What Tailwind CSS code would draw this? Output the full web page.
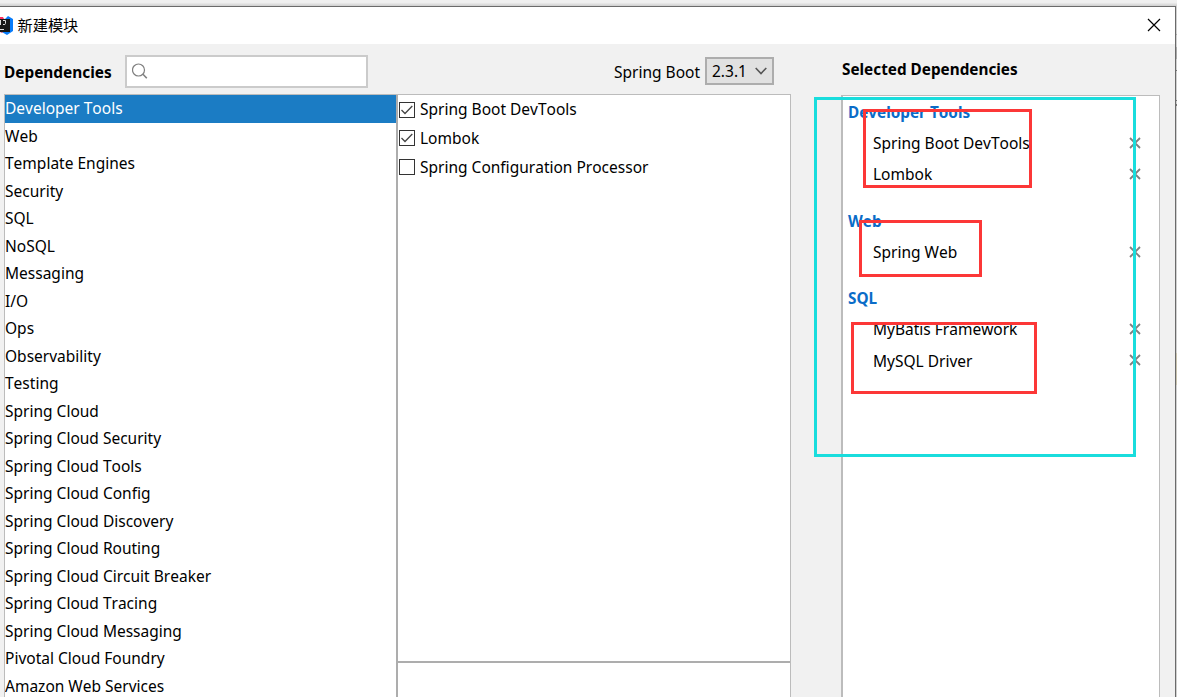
<!DOCTYPE html>
<html lang="zh-CN">
<head>
<meta charset="utf-8">
<title>新建模块</title>
<script src="https://cdn.jsdelivr.net/npm/@tailwindcss/browser@4"></script>
</head>
<body class="w-[1177px] h-[697px] overflow-hidden bg-[#f0f0f0] font-['Noto_Sans','Noto_Sans_CJK_SC',sans-serif] text-[15.5px] text-black [font-kerning:none]">
<div class="relative flex h-[697px] w-[1177px] flex-col overflow-hidden">
  <div class="h-1.5 shrink-0 bg-linear-to-b from-[#f0f0f0] from-40% to-[#cfcfcf]"></div>
  <div class="flex min-h-0 flex-1">
    <main class="flex w-[1176px] shrink-0 flex-col border-t border-r border-[#6b6b6b] bg-[#f1f1f1]">
      <header class="flex h-[37px] shrink-0 items-center bg-white pb-0.5">
        <svg class="h-5 w-[14px] shrink-0" viewBox="0 0 14 20">
          <path d="M0 3L5 4L8 1L13 4V16L7 20L0 16Z" fill="#087cfa"/>
          <path d="M0 2H3L4 4H0Z" fill="#fe315d"/><path d="M0 16H4L2 18L0 17Z" fill="#d94b78"/>
          <path d="M0 4H10V17H0Z" fill="#171717"/>
          <path d="M0.500 5V10M3 5.500H5.500V8.500Q5.500 10 3 9.500M0 14.500H4" stroke="#ddd" stroke-width="1" fill="none"/>
        </svg>
        <h1 class="ml-[3.500px] flex-1 text-[15.200px] leading-5">新建模块</h1>
        <svg class="mr-[14px] size-[14px]" viewBox="0 0 14 14" fill="none" stroke="#000" stroke-width="1.2"><path d="M1 1L13 13M13 1L1 13"/></svg>
      </header>
      <div class="flex min-h-0 flex-1">
        <section class="ml-1 flex w-[787px] shrink-0 flex-col">
          <div class="flex h-[50px] shrink-0 items-center pt-1">
            <h2 class="w-[121px] pt-[3px] text-[15.400px] font-bold leading-5">Dependencies</h2>
            <div class="flex h-[33px] w-[243px] items-center border-2 border-[#cbcbcb] bg-white pl-[5px]">
              <svg class="size-4" viewBox="0 0 16 16" fill="none" stroke="#7f7f7f" stroke-width="1.2"><circle cx="6.500" cy="7" r="6"/><path d="M11 11.300L14.800 15.300" stroke-width="1.6"/></svg>
            </div>
            <span class="ml-auto mr-[5px] pt-px leading-5">Spring Boot</span>
            <div class="mr-[17px] flex h-7 w-[69px] items-center justify-between border-2 border-[#adadad] bg-[#e1e1e1] pr-[5px] pl-[5px]">
              <span class="leading-5">2.3.1</span>
              <svg class="h-2 w-3" viewBox="0 0 12 8" fill="none" stroke="#555" stroke-width="1.6"><path d="M0.700 1L6 6.500L11.300 1"/></svg>
            </div>
          </div>
          <div class="flex min-h-0 flex-1 border-t border-r border-l border-[#bcbcbc] bg-white">
            <ul class="w-[391px] shrink-0 overflow-hidden leading-[27px]">
              <li class="-mb-[0.5px] h-7 bg-[#1b7cc4] text-white">Developer Tools</li>
              <li class="h-[27.5px]">Web</li>
              <li class="h-[27.5px]">Template Engines</li>
              <li class="h-[27.5px]">Security</li>
              <li class="h-[27.5px]">SQL</li>
              <li class="h-[27.5px]">NoSQL</li>
              <li class="h-[27.5px]">Messaging</li>
              <li class="h-[27.5px]">I/O</li>
              <li class="h-[27.5px]">Ops</li>
              <li class="h-[27.5px]">Observability</li>
              <li class="h-[27.5px]">Testing</li>
              <li class="h-[27.5px]">Spring Cloud</li>
              <li class="h-[27.5px]">Spring Cloud Security</li>
              <li class="h-[27.5px]">Spring Cloud Tools</li>
              <li class="h-[27.5px]">Spring Cloud Config</li>
              <li class="h-[27.5px]">Spring Cloud Discovery</li>
              <li class="h-[27.5px]">Spring Cloud Routing</li>
              <li class="h-[27.5px]">Spring Cloud Circuit Breaker</li>
              <li class="h-[27.5px]">Spring Cloud Tracing</li>
              <li class="h-[27.5px]">Spring Cloud Messaging</li>
              <li class="h-[27.5px]">Pivotal Cloud Foundry</li>
              <li class="h-[27.5px]">Amazon Web Services</li>
            </ul>
            <div class="flex flex-1 flex-col border-l-2 border-[#adadad]">
              <ul class="h-[566px] shrink-0 pl-px">
                <li class="flex h-[29px] items-center gap-[5px]"><svg class="size-4" viewBox="0 0 16 16" fill="none" stroke="#333"><rect x=".5" y=".5" width="15" height="15"/><path d="M2.500 8L6 11.500L13.300 4" stroke="#444" stroke-width="1.3"/></svg>Spring Boot DevTools</li>
                <li class="flex h-[28px] items-center gap-[5px]"><svg class="size-4" viewBox="0 0 16 16" fill="none" stroke="#333"><rect x=".5" y=".5" width="15" height="15"/><path d="M2.500 8L6 11.500L13.300 4" stroke="#444" stroke-width="1.3"/></svg><span class="pt-0.5">Lombok</span></li>
                <li class="flex h-[30px] items-center gap-[5px]"><svg class="size-4" viewBox="0 0 16 16" fill="none" stroke="#333"><rect x=".5" y=".5" width="15" height="15"/></svg><span class="pt-0.5">Spring Configuration Processor</span></li>
              </ul>
              <div class="h-0.5 bg-[#adadad]"></div>
            </div>
          </div>
        </section>
        <section class="ml-[50px] flex w-[319px] shrink-0 flex-col">
          <h2 class="h-[51px] pt-[15px] pl-px text-[15.300px] font-bold leading-5">Selected Dependencies</h2>
          <div class="flex-1 border-t border-r border-l-2 border-[#bcbcbc] bg-white pl-[5px]">
            <h3 class="flex h-[31px] items-center pt-0.5 text-[15.300px] font-bold text-[#0a6cc8]">Developer Tools</h3>
            <div class="flex h-[31px] items-center justify-between pr-[18px] pl-[25px]"><span class="pt-0.5">Spring Boot DevTools</span><svg class="size-3" viewBox="0 0 12 12" stroke="#808080" stroke-width="1.8"><path d="M1 1L11 11M11 1L1 11"/></svg></div>
            <div class="flex h-[31px] items-center justify-between pr-[18px] pl-[25px]"><span class="pt-0.5">Lombok</span><svg class="size-3" viewBox="0 0 12 12" stroke="#808080" stroke-width="1.8"><path d="M1 1L11 11M11 1L1 11"/></svg></div>
            <h3 class="mt-4 flex h-[31px] items-center pt-0.5 text-[15.300px] font-bold text-[#0a6cc8]">Web</h3>
            <div class="flex h-[31px] items-center justify-between pr-[18px] pl-[25px]"><span class="pt-0.5">Spring Web</span><svg class="size-3" viewBox="0 0 12 12" stroke="#808080" stroke-width="1.8"><path d="M1 1L11 11M11 1L1 11"/></svg></div>
            <h3 class="mt-[15px] flex h-[31px] items-center pt-0.5 text-[15.300px] font-bold text-[#0a6cc8]">SQL</h3>
            <div class="flex h-[31px] items-center justify-between pr-[18px] pl-[25px]"><span class="pt-0.5">MyBatis Framework</span><svg class="size-3" viewBox="0 0 12 12" stroke="#808080" stroke-width="1.8"><path d="M1 1L11 11M11 1L1 11"/></svg></div>
            <div class="flex h-[31px] items-center justify-between pr-[18px] pl-[25px]"><span class="pt-1">MySQL Driver</span><svg class="size-3" viewBox="0 0 12 12" stroke="#808080" stroke-width="1.8"><path d="M1 1L11 11M11 1L1 11"/></svg></div>
          </div>
        </section>
      </div>
    </main>
    <div class="flex flex-1 flex-col bg-[#d0d0d0]">
      <div class="mt-7 h-px bg-[#aaa]"></div>
      <div class="mt-3 h-3 bg-[#aaa]"></div>
      <div class="mt-[11px] h-px bg-[#777]"></div>
      <div class="mt-[29px] h-px bg-[#777]"></div>
      <div class="mt-[3px] h-0.5 bg-[#777]"></div>
      <div class="mt-[247px] h-8 bg-[#c9c3ae]"></div>
    </div>
  </div>
  <!-- Annotation frames -->
  <div class="absolute top-[97px] left-[814px] h-[360px] w-[322px] border-3 border-[#19dddd]"></div>
  <div class="absolute top-[109px] left-[863px] h-[79px] w-[169px] border-3 border-[#fc3737]"></div>
  <div class="absolute top-[220px] left-[859px] h-[57px] w-[123px] border-3 border-[#fc3737]"></div>
  <div class="absolute top-[322px] left-[851px] h-[72px] w-[186px] border-3 border-[#fc3737]"></div>
</div>
</body>
</html>
